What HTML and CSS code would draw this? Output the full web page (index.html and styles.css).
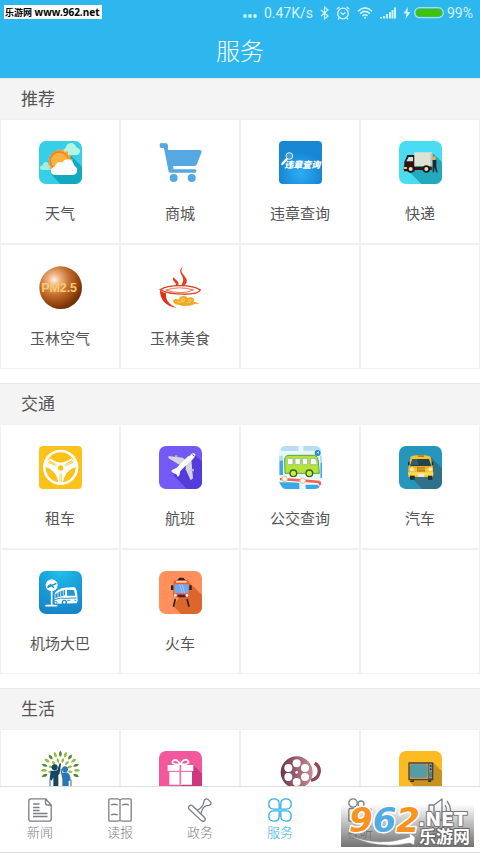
FILE: index.html
```html
<!DOCTYPE html>
<html lang="zh-CN">
<head>
  <meta charset="UTF-8" />
  <meta name="viewport" content="width=device-width, initial-scale=1" />
  <title>服务</title>
  <link rel="stylesheet" href="styles.css">
</head>
<body>
  <header class="header">
    <div class="site-tag"><span class="site-name">乐游网</span> www.962.net</div>
    <div class="status-bar">
      <svg class="dots" width="14" height="14" viewBox="0 0 14 14" fill="currentColor"><circle cx="2" cy="10" r="1.9"/><circle cx="7" cy="10" r="1.9"/><circle cx="12" cy="10" r="1.9"/></svg>
      <span class="speed">0.47K/s</span>
      <svg width="9" height="14" viewBox="0 0 9 14" fill="none" stroke="currentColor" stroke-width="1.2"><path d="M1 4l7 6-3.500 3V1L8 4 1 10"/></svg>
      <svg width="14" height="14" viewBox="0 0 14 14" fill="none" stroke="currentColor" stroke-width="1.300"><circle cx="7" cy="7.500" r="5.300"/><path d="M4.500 6.500L7 8.500l2.500-2M.8 3.200L3.400 1M13.200 3.200L10.600 1M3 12l-1 1.300M11 12l1 1.300"/></svg>
      <svg width="16" height="14" viewBox="0 0 16 14" fill="none" stroke="currentColor" stroke-width="1.500"><path d="M1 5.200Q8-1.400 15 5.200M3.200 7.600Q8 3.200 12.800 7.600M5.400 9.900Q8 7.600 10.600 9.900"/><circle cx="8" cy="11.700" r="1" fill="currentColor" stroke="none"/></svg>
      <svg width="16" height="14" viewBox="0 0 16 14" fill="currentColor"><path d="M0 11h2v1.500H0zM3 10h2v2.500H3zM6 8h2v4.500H6zM9 6h2v6.500H9zM11.500 4h2v8.500h-2zM14 1.500h2v11h-2z"/></svg>
      <div class="battery">
        <svg width="8" height="14" viewBox="0 0 8 14" fill="currentColor"><path d="M5 1L.5 7.500H3.500L2.500 13 7.500 6H4.500z"/></svg>
        <svg width="30" height="14" viewBox="0 0 30 14"><rect x=".7" y="1.700" width="28.600" height="10" rx="5" fill="#2eb6ee" stroke="#a5e6c8" stroke-width="1.200"/><rect x="2" y="3" width="26" height="7.500" rx="3.700" fill="#3fc20c"/></svg>
        <span>99%</span>
      </div>
    </div>
    <h1>服务</h1>
  </header>

  <main class="content">
    <section class="group">
      <h2>推荐</h2>
      <div class="grid">
        <a class="cell" href="#">
          <svg class="icon tile" viewBox="0 0 129 129">
            <rect width="129" height="129" fill="#37cfe8"/>
            <path d="M94 42l35 35v52H64L38 101z" fill="#12a8bf"/>
            <path d="M77 42a9 9 0 0 1-1-18c4-1 4-5 6-9 4-9 16-13 24-5 4 3 4 7 8 10 13 3 12 22-2 22z" fill="#b5f4e0"/>
            <path d="M8 87c-8-2-6-14 3-14 2-13 18-13 20-1l12 15z" fill="#9fefdf"/>
            <path d="M60 21l6 8 8-5 3 9 10-2 0 10 10 1-4 9 9 5-7 7 7 7-9 5 4 9-10 1-2 10-9-2-5 8-7-6-7 6-5-8-9 2-2-10-10-1 4-9-9-5 7-7-7-7 9-5-4-9 10-1 0-10 9 2 4-9 8 5z" fill="#f6a83d"/>
            <circle cx="60" cy="59" r="29" fill="#f08129"/><circle cx="61" cy="60" r="25" fill="#ffb13d"/>
            <path d="M49 102c-18-1-17-24-1-25 2-12 12-17 22-12 7-16 31-13 34 4 3 4 1 6 6 8 9 7 5 24-9 25z" fill="#fff"/>
          </svg>
          <span>天气</span>
        </a>
        <a class="cell" href="#">
          <svg class="icon" viewBox="0 0 129 129">
            <path d="M8 14h11l15 76h73" fill="none" stroke="#55a8e2" stroke-width="11" stroke-linejoin="round" stroke-linecap="round"/>
            <path d="M3 7h18q5 0 6 7v8l-7-1H7q-5-1-5-6z" fill="#55a8e2"/>
            <path d="M25 27h98q6 0 5 6l-14 36q-2 6-8 6H42l2 10H33z" fill="#55a8e2"/>
            <circle cx="44" cy="111" r="12" fill="#55a8e2"/><circle cx="98" cy="111" r="12" fill="#55a8e2"/>
          </svg>
          <span>商城</span>
        </a>
        <a class="cell" href="#">
          <svg class="icon tile-sm" viewBox="0 0 129 129">
            <defs><radialGradient id="blueGlow" cy=".75"><stop offset="0" stop-color="#2eacf6"/><stop offset="1" stop-color="#1887d3"/></radialGradient></defs>
            <rect width="129" height="129" fill="url(#blueGlow)"/>
            <circle cx="31" cy="45" r="10" fill="#4999d0" stroke="#e4f6ff" stroke-width="3"/><path d="M23 54L10 69" stroke="#fff" stroke-width="7" stroke-linecap="round"/>
            <text class="tile-text" x="16" y="82">违章查询</text>
          </svg>
          <span>违章查询</span>
        </a>
        <a class="cell" href="#">
          <svg class="icon tile" viewBox="0 0 129 129">
            <rect width="129" height="129" fill="#4adcf2"/>
            <path d="M100 35l29 28v66H67L31 93z" fill="#23a9bd"/>
            <path d="M16 63l9-21h22v49H15z" fill="#35120f"/><path d="M22 61l7-13h13v13z" fill="#bcecf0"/>
            <path d="M46 34h54v42H46z" fill="#dce2d4"/><path d="M94 35l6 2v38h-6z" fill="#c0c8bc"/>
            <path d="M14 77h84v10H14z" fill="#35120f"/><path d="M14 78h10v6H14z" fill="#f3c54f"/>
            <circle cx="35" cy="84" r="11" fill="#29120f"/><circle cx="35" cy="84" r="6" fill="#e0dfd0"/><circle cx="82" cy="84" r="11" fill="#29120f"/><circle cx="82" cy="84" r="6" fill="#e0dfd0"/>
            <circle cx="106" cy="51" r="5" fill="#edae48"/><path d="M98 47v11l12-2z" fill="#e5ad62"/><path d="M101 57h11v20l4 17h-5l-4-16-2 16h-4z" fill="#23262a"/>
          </svg>
          <span>快递</span>
        </a>
        <a class="cell" href="#">
          <svg class="icon" viewBox="0 0 129 129">
            <defs><radialGradient id="ball" cx=".35" cy=".32" r=".7"><stop offset="0" stop-color="#fff3e5"/><stop offset=".2" stop-color="#efb583"/><stop offset=".5" stop-color="#c66f2f"/><stop offset=".8" stop-color="#97460f"/><stop offset="1" stop-color="#6f2e08"/></radialGradient></defs>
            <circle cx="65" cy="65" r="64" fill="url(#ball)"/>
            <text class="pm-text" x="7" y="79">PM2.5</text>
          </svg>
          <span>玉林空气</span>
        </a>
        <a class="cell" href="#">
          <svg class="icon" viewBox="0 0 129 129">
            <path d="M72 1C49 20 82 31 70 51c-3 8-5 11-10 15 22-8 28-17 21-29C74 24 60 18 72 1z" fill="#e04321"/>
            <path d="M45 33c-13 11 13 17 4 27l-8 8c22-6 20-18 13-24-5-5-10-6-9-11z" fill="#e04321"/>
            <path d="M4 71c27-17 96-15 120 1-7 17-90 17-120-1z" fill="#fff" stroke="#dd421f" stroke-width="4"/>
            <path d="M20 72q42-13 84 0-39 16-84 0z" fill="none" stroke="#e77654" stroke-width="3"/>
            <path d="M3 71q1 5 18 11c-2 18 7 34 32 43C18 121 2 98 3 71z" fill="#da3218"/>
            <path d="M43 109c-4-9 10-13 15-7 3-14 23-15 28-6 14-7 24 5 17 11 8 1 15 3 19 7-18-3-23 8-40 5-18 4-18-5-31-3z" fill="#f0ab25"/>
            <path d="M53 108h15c13 0 10-13 1-10-8 3 0 9 5 5M83 111c11 1 18-8 10-11-8 0-4 8 1 5" fill="none" stroke="#fbdc9a" stroke-width="2"/>
          </svg>
          <span>玉林美食</span>
        </a>
        <div class="cell"></div>
        <div class="cell"></div>
      </div>
    </section>

    <section class="group">
      <h2>交通</h2>
      <div class="grid">
        <a class="cell" href="#">
          <svg class="icon tile-sm" viewBox="0 0 129 129">
            <rect width="129" height="129" fill="#fcc21a"/>
            <circle cx="65" cy="64" r="49" fill="none" stroke="#fff" stroke-width="8"/>
            <path d="M19 51l14-14q20 13 32 13t32-13l14 14v11q-34 11-40 49H59q-6-38-40-49z" fill="#fff"/>
            <path d="M32 43l22 13-4 3-23-9zM98 43L76 56l4 3 23-9zM62 83h6v26h-6z" fill="#fcc21a"/>
            <path d="M28 46l24 11M102 46L78 57M65 82v27" stroke="#fff" stroke-width="2"/>
            <circle cx="65" cy="66" r="8" fill="#fcc21a"/>
          </svg>
          <span>租车</span>
        </a>
        <a class="cell" href="#">
          <svg class="icon tile" viewBox="0 0 129 129">
            <rect width="129" height="129" fill="#7559f5"/>
            <path d="M107 26l22 21v82H84L43 88z" fill="#543bdc"/>
            <path d="M28 30l43 5 15 11-20 13-37-22z" fill="#d6d5df"/><path d="M81 52l16-11 5 56-7 6-15-33z" fill="#d6d5df"/>
            <path d="M96 25c5-4 11-4 12-1 3 5-3 13-8 17L61 74l-3 18-6-7-13-6 19-5 29-39z" fill="#fff"/>
            <path d="M88 30L52 66l-13 6-2 5 16 2 2 13 6-4 3-13 38-38z" fill="#fff"/>
            <path d="M101 25l5 6" stroke="#344250" stroke-width="3"/><path d="M48 28h7v5h-7zM97 69h8v7h-6z" fill="#b5b0cb"/>
          </svg>
          <span>航班</span>
        </a>
        <a class="cell" href="#">
          <svg class="icon tile" viewBox="0 0 129 129">
            <rect width="129" height="129" fill="#e8f7fd"/>
            <path d="M0 0h58v15H7zM73 0h56v14H73zM0 29h12v58H0zM123 29h6v65h-6z" fill="#b9dcf5"/><path d="M2 44h10v43H2zM125 51h4v45h-4zM0 109h61v20H13zM79 116h42v13H81z" fill="#3ba9e8"/>
            <path d="M17 42q0-14 13-14h76q11 2 12 20l3 34H18z" fill="#b6e434" stroke="#53a743" stroke-width="3"/>
            <g fill="#fff" stroke="#6bab8d" stroke-width="2"><rect x="25" y="37" width="17" height="19" rx="3"/><rect x="48" y="37" width="16" height="19" rx="3"/><rect x="70" y="37" width="16" height="19" rx="3"/><path d="M94 37h14q7 9 7 19H94z"/></g>
            <g fill="#c6ee3a" stroke="#35613d" stroke-width="4"><circle cx="43" cy="82" r="10"/><circle cx="91" cy="82" r="10"/></g>
            <path d="M3 99l62 4 56 5 3 9" fill="none" stroke="#fff" stroke-width="14"/><path d="M3 99l62 4 56 5 3 9" fill="none" stroke="#ef654f" stroke-width="8"/>
            <circle cx="17" cy="99" r="8" fill="#fff" stroke="#edb879" stroke-width="3"/><circle cx="71" cy="104" r="8" fill="#fff" stroke="#edb879" stroke-width="3"/>
            <circle cx="116" cy="21" r="9" fill="#2388cb"/><path d="M113 22l5-5v7" fill="none" stroke="#fff" stroke-width="2"/>
          </svg>
          <span>公交查询</span>
        </a>
        <a class="cell" href="#">
          <svg class="icon tile" viewBox="0 0 129 129">
            <rect width="129" height="129" fill="#2595bc"/>
            <path d="M95 33l34 34v62H70L29 87z" fill="#2f7188"/>
            <path d="M35 33q1-4 20-5h20q20 1 20 6l7 33v26H28V66z" fill="#f4c12f"/>
            <path d="M57 28h18v5H57z" fill="#c57916"/><path d="M40 39h50l7 21H33z" fill="#234352"/><path d="M41 39h13l5 18H34z" fill="#395b67"/>
            <path d="M27 47h5v11h-5zM98 47h5v11h-5z" fill="#222f39"/><path d="M31 61h67v4H31z" fill="#eca41d"/><path d="M54 63h24v14H54z" fill="#b98520"/>
            <path d="M57 67h20M57 71h20" stroke="#e0aa31" stroke-width="2"/><circle cx="39" cy="70" r="6" fill="#fff0b9"/><circle cx="94" cy="70" r="6" fill="#fff0b9"/>
            <path d="M28 79h75v9H28z" fill="#ffdb55"/><path d="M33 89h14v12H33zM87 89h13v12H87z" fill="#242d32"/><path d="M57 83h19v10H57z" fill="#eee8cf"/>
          </svg>
          <span>汽车</span>
        </a>
        <a class="cell" href="#">
          <svg class="icon tile" viewBox="0 0 129 129">
            <defs><radialGradient id="skyGlow" cy="0" r="1"><stop offset="0" stop-color="#20c0e9"/><stop offset=".5" stop-color="#199edb"/><stop offset="1" stop-color="#1685c7"/></radialGradient></defs>
            <rect width="129" height="129" fill="url(#skyGlow)"/>
            <circle cx="38" cy="43" r="18" fill="#fff"/><path d="M25 50l27-13M32 39l13 11M27 44l10 2" stroke="#1688c2" stroke-width="4"/><path d="M38 60v44M19 104h36" stroke="#fff" stroke-width="5"/>
            <path d="M47 66q13-14 29-16l29-2q10 2 11 41l-3 8-66 1z" fill="#fff"/><path d="M49 70q12-11 29-14v17l-29 8zM84 57h21l4 17H84z" fill="#2497d0"/><path d="M57 64v14M65 60v17M73 56v17" stroke="#fff" stroke-width="2"/><path d="M47 86q18-7 32-4l34-1M85 88h9M106 88h6" stroke="#2497d0" stroke-width="3" fill="none"/>
            <circle cx="76" cy="94" r="6" fill="#fff" stroke="#198fc9" stroke-width="4"/><circle cx="50" cy="95" r="4" fill="#fff" stroke="#198fc9" stroke-width="3"/>
          </svg>
          <span>机场大巴</span>
        </a>
        <a class="cell" href="#">
          <svg class="icon tile" viewBox="0 0 129 129">
            <rect width="129" height="129" fill="#ff905b"/>
            <path d="M92 36l37 36v57H66L43 105z" fill="#dc662c"/>
            <path d="M57 25l4-5h12l4 5v7H57z" fill="#242429"/><path d="M44 32q0-5 12-5h22q12 0 12 5l2 40q-2 7-13 7H54q-11 0-12-7z" fill="#f25532"/>
            <path d="M51 30h32v5H51z" fill="#ffd4ad"/><path d="M46 40h43v27H46z" fill="#72a8ed"/><path d="M62 40l8 27M69 40l8 27" stroke="#b9d8ff" stroke-width="2"/>
            <path d="M36 43h7v14h-7zM91 43h7v14h-7z" fill="#242429"/><circle cx="49" cy="73" r="4" fill="#fff"/><circle cx="84" cy="73" r="4" fill="#fff"/>
            <path d="M56 71h23v8H56z" fill="#45232c"/><path d="M49 84l-6 23M84 84l6 23" stroke="#25262b" stroke-width="5"/>
          </svg>
          <span>火车</span>
        </a>
        <div class="cell"></div>
        <div class="cell"></div>
      </div>
    </section>

    <section class="group">
      <h2>生活</h2>
      <div class="grid">
        <a class="cell" href="#" aria-label="养老">
          <svg class="icon" viewBox="0 0 129 129">
            <defs>
              <path id="leaf" d="M64-1q9 10 0 19-9-9 0-19z"/>
              <path id="leafSmall" d="M64 20q8 8 0 16-8-8 0-16z"/>
            </defs>
            <g fill="#55843a">
              <use href="#leaf"/><use href="#leaf" transform="rotate(36 64 58)"/><use href="#leaf" transform="rotate(72 64 58)"/><use href="#leaf" transform="rotate(108 64 58)"/><use href="#leaf" transform="rotate(-36 64 58)"/><use href="#leaf" transform="rotate(-72 64 58)"/><use href="#leaf" transform="rotate(-108 64 58)"/>
            </g>
            <g fill="#94bd45">
              <use href="#leaf" transform="rotate(18 64 58)"/><use href="#leaf" transform="rotate(54 64 58)"/><use href="#leaf" transform="rotate(90 64 58)"/><use href="#leaf" transform="rotate(-18 64 58)"/><use href="#leaf" transform="rotate(-54 64 58)"/><use href="#leaf" transform="rotate(-90 64 58)"/>
              <use href="#leafSmall" transform="rotate(-14 64 58)"/><use href="#leafSmall" transform="rotate(14 64 58)"/><use href="#leafSmall" transform="rotate(42 64 58)"/><use href="#leafSmall" transform="rotate(-42 64 58)"/><use href="#leafSmall" transform="rotate(70 64 58)"/><use href="#leafSmall" transform="rotate(-70 64 58)"/><use href="#leafSmall" transform="rotate(98 64 58)"/><use href="#leafSmall" transform="rotate(-98 64 58)"/>
            </g>
            <circle cx="47" cy="49" r="9" fill="#17445e"/><path d="M35 60l20-2 7-22 4 2-4 29-4 6v56H43V79l-5 10-6-4z" fill="#17445e"/>
            <circle cx="78" cy="55" r="9" fill="#2878b5"/><path d="M70 65l12-1q12 2 13 24l-6 2v39H70V85l-6-30 4-2z" fill="#2878b5"/><path d="M33 86v32M96 86v32" stroke="#376f78" stroke-width="3"/>
          </svg>
        </a>
        <a class="cell" href="#" aria-label="礼品">
          <svg class="icon tile" viewBox="0 0 129 129">
            <rect width="129" height="129" fill="#f3589f"/><path d="M103 42l26 26v61H53z" fill="#cc377e"/>
            <path d="M64 40C48 41 35 37 42 30c8-8 17 1 22 10 6-12 17-19 23-10 6 8-7 11-23 10z" fill="none" stroke="#fff" stroke-width="5"/>
            <path d="M26 42h77v18H26zM31 62h68v39H31z" fill="#fff"/><path d="M64 42v59" stroke="#ed73a9" stroke-width="5"/><path d="M28 61h72" stroke="#ed73a9" stroke-width="3"/>
          </svg>
        </a>
        <a class="cell" href="#" aria-label="电影">
          <svg class="icon" viewBox="0 0 129 129">
            <defs><linearGradient id="film"><stop offset="0" stop-color="#71334b"/><stop offset="1" stop-color="#c58e93"/></linearGradient></defs>
            <circle cx="53" cy="64" r="48" fill="url(#film)"/>
            <g fill="#fff"><circle cx="53" cy="37" r="12"/><circle cx="28" cy="51" r="12"/><circle cx="78" cy="51" r="12"/><circle cx="28" cy="78" r="12"/><circle cx="78" cy="78" r="12"/><circle cx="53" cy="93" r="12"/><circle cx="53" cy="64" r="4"/></g>
            <path d="M107 37c21 11 18 45-11 51" fill="none" stroke="#8f4656" stroke-width="10"/>
          </svg>
        </a>
        <a class="cell" href="#" aria-label="电视">
          <svg class="icon tile" viewBox="0 0 129 129">
            <rect width="129" height="129" fill="#fcbb21"/><path d="M103 35l26 26v68H67L31 91z" fill="#c69320"/>
            <rect x="28" y="34" width="75" height="54" rx="2" fill="#424246"/><rect x="32" y="38" width="56" height="46" fill="#e78935"/><rect x="33" y="40" width="52" height="40" rx="9" fill="#539da4"/>
            <path d="M90 38h9v44h-9z" fill="#6ea4a5"/><circle cx="95" cy="45" r="3" fill="#333"/><circle cx="95" cy="55" r="3" fill="#333"/><path d="M91 65h7M91 70h7M91 75h7" stroke="#333" stroke-width="2"/><path d="M34 88h11v5H34zM87 88h10v5H87z" fill="#333"/>
          </svg>
        </a>
      </div>
    </section>
  </main>

  <nav class="tabbar">
    <a class="tab" href="#">
      <svg viewBox="0 0 24 24"><path d="M3 .8h14.500L23.200 7v14q0 2.200-2.200 2.200H3Q.8 23.200.8 21V3Q.8.800 3 .8zM17.500.8V5q0 2 2 2h3.700M5 6h6.500M5 9.500h6.500M5 12.500h6.500M5 15.500h14.500M5 18.500h14.500"/></svg>
      <span>新闻</span>
    </a>
    <a class="tab" href="#">
      <svg viewBox="0 0 24 24"><path d="M12 2.200Q11 .8 9.500.8H2Q.8.800.8 2v20q0 1.200 1.200 1.200h7.500q1.500 0 2.500-.7 1 .7 2.500.7H22q1.200 0 1.200-1.200V2Q23.200.8 22 .8h-7.500Q13 .8 12 2.200zV23M2.800 7q3.800-1.500 7 0M14 7q3.800-1.500 7 0M2.800 17q3.800-1.500 7 0"/></svg>
      <span>读报</span>
    </a>
    <a class="tab" href="#">
      <svg viewBox="0 0 24 24"><path d="M1.200 8q1.700-1.700 3.600 0l11.700 11.500q1.600 1.800 0 3.300-1.500 1.300-3.200-.2L1.200 11.200Q-.2 9.500 1.200 8zM9.500 12.300q6-3.500 6.500-9Q16.500.8 18.500.8q1.500 0 4 3 1.300 2-.3 3-1 .7-3.200.9-4.500.8-6 8.100"/></svg>
      <span>政务</span>
    </a>
    <a class="tab active" href="#">
      <svg viewBox="0 0 24 24"><path d="M6 .8q5.200 0 5.200 5.200v5.200H6Q.8 11.200.8 6T6 .8zM18 .8q5.200 0 5.200 5.200T18 11.200h-5.200V6q0-5.200 5.200-5.200zM6 12.800h5.200V18q0 5.200-5.200 5.200T.8 18 6 12.800zM12.800 12.800H18q5.200 0 5.200 5.200T18 23.200 12.800 18z"/></svg>
      <span>服务</span>
    </a>
    <a class="tab" href="#">
      <svg viewBox="0 0 24 24"><circle cx="5" cy="5" r="4.200"/><circle cx="13" cy="6" r="3"/><path d="M2 10.500h14q1.500 0 1.500 1.500v10q0 1.200-1.500 1.200H2Q.8 23.200.8 22V12q0-1.500 1.200-1.500zM17.500 14l5.500-3v10l-5.500-3"/></svg>
      <span>视听</span>
    </a>
    <a class="tab" href="#">
      <svg viewBox="0 0 24 24"><path d="M1 7h5l8-6v22l-8-6H1zM6 7v10M17 7q3 5 0 10M19 3q7 9 0 18"/></svg>
      <span>爆料</span>
    </a>
    <div class="watermark">
      <svg viewBox="0 0 133 43">
        <path d="M8 31q29 13 61 2l-1-4 6 4-1 8-4-2Q35 46 8 31z" fill="#fff" stroke="#999" stroke-width=".5"/>
        <text class="mark-num" x="8" y="28"><tspan class="orange">9</tspan><tspan class="blue">6</tspan><tspan class="orange">2</tspan></text>
        <text class="mark-net" x="77" y="22">.NET</text>
        <text class="mark-name" x="78" y="39">乐游网</text>
      </svg>
    </div>
  </nav>
</body>
</html>
```
FILE: styles.css
```css
* {
  box-sizing: border-box;
}

body {
  margin: 0;
  height: 100vh;
  display: flex;
  flex-direction: column;
  overflow: hidden;
  background: #fff;
  color: #555;
  font-family: "Noto Sans CJK SC", sans-serif;
}

a {
  color: inherit;
  text-decoration: none;
}

svg {
  display: block;
}

.header {
  position: relative;
  flex: none;
  height: 78px;
  background: #2eb6ee;
  color: #d3f4ff;
}

.header h1 {
  margin: 0;
  font-size: 24px;
  font-weight: 300;
  line-height: 48px;
  text-align: center;
  color: #fff;
}

.site-tag {
  position: absolute;
  top: 5px;
  left: 4px;
  height: 14px;
  padding: 0 2px 0 1px;
  background: #fff;
  color: #000;
  font-family: "Noto Sans", "Noto Sans CJK SC", sans-serif;
  font-size: 10px;
  font-weight: bold;
  line-height: 14px;
  white-space: nowrap;
}

.site-name {
  font-size: 9px;
}

.status-bar {
  display: flex;
  justify-content: flex-end;
  align-items: center;
  gap: 7px;
  height: 26px;
  padding-right: 7px;
  font-family: Roboto, sans-serif;
  font-size: 14px;
}

.battery {
  display: flex;
  align-items: center;
  gap: 3px;
}

.content {
  flex: 1;
  min-height: 0;
  overflow-y: auto;
  scrollbar-width: none;
}

.group {
  margin-bottom: 14px;
}

.group h2 {
  margin: 0;
  height: 41px;
  padding-left: 21px;
  border-top: 1px solid #e8e8e8;
  background: #f4f4f4;
  font-size: 17px;
  font-weight: 400;
  line-height: 38px;
}

.grid {
  display: grid;
  grid-template-columns: repeat(4, 1fr);
}

.cell {
  display: flex;
  flex-direction: column;
  align-items: center;
  gap: 17px;
  height: 125px;
  padding-top: 21px;
  border: 1px solid #f1f1f1;
  font-size: 15px;
  line-height: 24px;
}

.icon {
  width: 43px;
  height: 43px;
}

.tile {
  border-radius: 7px;
}

.tile-sm {
  border-radius: 4px;
}

.tile-text {
  fill: #fff;
  font-size: 27px;
  font-weight: 900;
  font-style: italic;
}

.pm-text {
  fill: #f8cb70;
  font-family: "Liberation Sans", sans-serif;
  font-size: 37px;
  font-weight: bold;
}

.tabbar {
  position: relative;
  flex: none;
  display: flex;
  height: 67px;
  border-top: 1px solid #ddd;
  border-bottom: 1px solid #ddd;
  background: #fff;
}

.tab {
  flex: 1;
  display: flex;
  flex-direction: column;
  align-items: center;
  gap: 1px;
  padding-top: 11px;
  color: #7c7f83;
  font-size: 13px;
  font-weight: 300;
  line-height: 18px;
}

.tab svg {
  width: 24px;
  height: 24px;
  fill: none;
  stroke: currentColor;
  stroke-width: 1.3;
  stroke-linejoin: round;
}

.tab.active {
  color: #2eb0e5;
}

/* site mark over the last two tabs */
.watermark {
  position: absolute;
  right: 6px;
  bottom: 5px;
  width: 133px;
  height: 43px;
  background: linear-gradient(rgba(90, 90, 90, 0), rgba(90, 90, 90, 0.85));
  pointer-events: none;
}

.watermark svg {
  overflow: visible;
}

.watermark text {
  paint-order: stroke;
  stroke-linejoin: round;
  font-weight: bold;
}

.mark-num {
  font-family: "DejaVu Sans", sans-serif;
  font-size: 34px;
  font-style: italic;
  stroke: #fff;
  stroke-width: 3px;
}

.orange {
  fill: #f7931e;
}

.blue {
  fill: #52abe5;
}

.mark-net {
  fill: #fff;
  font-family: "DejaVu Sans", sans-serif;
  font-size: 19px;
  stroke: #777;
  stroke-width: 2px;
}

.mark-name {
  fill: #fff;
  font-size: 17px;
  stroke: #666;
  stroke-width: 2px;
}
```
